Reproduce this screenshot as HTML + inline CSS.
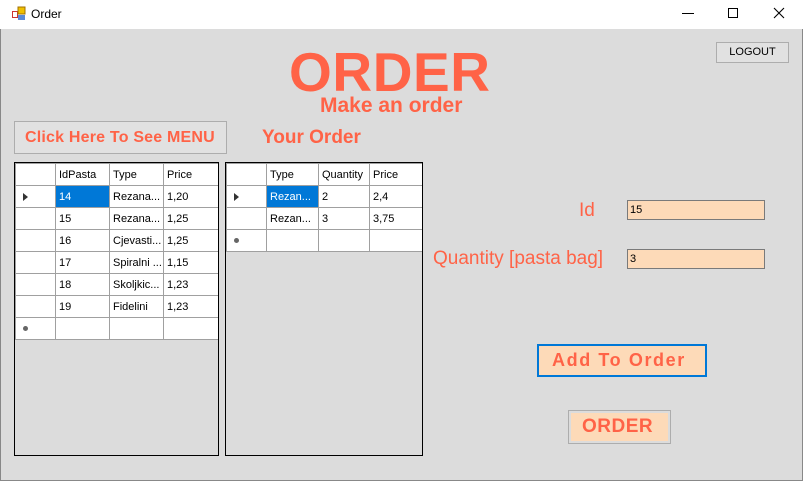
<!DOCTYPE html>
<html><head><meta charset="utf-8"><style>
*{margin:0;padding:0;box-sizing:border-box}
body{width:805px;height:482px;background:#fff;position:relative;overflow:hidden;font-family:"Liberation Sans",Arial,sans-serif}
.win{position:absolute;left:0;top:0;width:803px;height:481px;background:#dcdcdc}
.title{position:absolute;left:0;top:0;width:803px;height:29px;background:#fff}
.abs{position:absolute}
.o{color:#ff6347;font-weight:bold;white-space:nowrap}
table{border-collapse:collapse;font-size:11px;color:#000}
td{border:1px solid #a0a0a0;height:22px;padding:0 0 0 3px;white-space:nowrap;overflow:hidden;background:#fff}
td.rh{padding:0}
.sel{background:#0078d7;color:#fff}
.grid{position:absolute;border:1px solid #000;background:#dcdcdc;overflow:hidden}
.tri{display:inline-block;width:0;height:0;border-left:5px solid #333;border-top:4px solid transparent;border-bottom:4px solid transparent;margin-left:7px;vertical-align:middle}
.dot{display:inline-block;width:5px;height:5px;border-radius:50%;background:#666;margin-left:7px;vertical-align:middle}
input{position:absolute;background:#fddab8;border:1px solid #7a7a7a;font-family:"Liberation Sans",sans-serif;font-size:11px;padding-left:2px}
</style></head><body>
<div class="win">
<div class="abs" style="left:0;top:0;width:1px;height:481px;background:#888"></div>
<div class="abs" style="left:802px;top:0;width:1px;height:481px;background:#888"></div>
<div class="abs" style="left:0;top:480px;width:803px;height:1px;background:#888"></div>
<div class="title">
 <svg class="abs" style="left:11px;top:6px" width="16" height="16"><rect x="1" y="5" width="6" height="7" fill="#c33"/><rect x="2" y="6" width="4" height="5" fill="#fff"/><rect x="7" y="1" width="7" height="7" fill="#f0c000" stroke="#a07000"/><rect x="7" y="9" width="7" height="5" fill="#5a8ad8"/></svg>
 <div class="abs" style="left:31px;top:7px;font-size:12px">Order</div>
 <div class="abs" style="left:682px;top:13px;width:12px;height:1px;background:#000"></div>
 <div class="abs" style="left:728px;top:8px;width:10px;height:10px;border:1px solid #000"></div>
 <svg class="abs" style="left:773px;top:7px" width="12" height="12"><path d="M1 1L11 11M11 1L1 11" stroke="#000" stroke-width="1.1"/></svg>
</div>
<div class="abs" style="left:716px;top:42px;width:73px;height:21px;border:1px solid #adadad;background:#e1e1e1;font-size:11px;text-align:center;line-height:19px">LOGOUT</div>
<div class="abs o" style="left:289px;top:42px;font-size:55px;line-height:60px;letter-spacing:0.6px">ORDER</div>
<div class="abs o" style="left:320px;top:94px;font-size:21px;line-height:24px">Make an order</div>
<div class="abs" style="left:14px;top:121px;width:213px;height:33px;border:1px solid #adadad;background:#e1e1e1"></div>
<div class="abs o" style="left:25px;top:128px;font-size:16px;line-height:20px;letter-spacing:0.2px">Click Here To See MENU</div>
<div class="abs o" style="left:262px;top:127px;font-size:19px;line-height:22px">Your Order</div>

<div class="grid" style="left:14px;top:162px;width:205px;height:294px">
<table style="width:203px;table-layout:fixed">
<col style="width:40px"><col style="width:54px"><col style="width:54px"><col style="width:55px">
<tr><td></td><td>IdPasta</td><td>Type</td><td>Price</td></tr>
<tr><td class="rh"><span class="tri"></span></td><td class="sel">14</td><td>Rezana...</td><td>1,20</td></tr>
<tr><td></td><td>15</td><td>Rezana...</td><td>1,25</td></tr>
<tr><td></td><td>16</td><td>Cjevasti...</td><td>1,25</td></tr>
<tr><td></td><td>17</td><td>Spiralni ...</td><td>1,15</td></tr>
<tr><td></td><td>18</td><td>Skoljkic...</td><td>1,23</td></tr>
<tr><td></td><td>19</td><td>Fidelini</td><td>1,23</td></tr>
<tr><td class="rh"><span class="dot"></span></td><td></td><td></td><td></td></tr>
</table></div>

<div class="grid" style="left:225px;top:162px;width:198px;height:294px">
<table style="width:196px;table-layout:fixed">
<col style="width:40px"><col style="width:52px"><col style="width:51px"><col style="width:53px">
<tr><td></td><td>Type</td><td>Quantity</td><td>Price</td></tr>
<tr><td class="rh"><span class="tri"></span></td><td class="sel">Rezan...</td><td>2</td><td>2,4</td></tr>
<tr><td></td><td>Rezan...</td><td>3</td><td>3,75</td></tr>
<tr><td class="rh"><span class="dot"></span></td><td></td><td></td><td></td></tr>
</table></div>

<div class="abs" style="left:579px;top:200px;font-size:19px;color:#ff6347;line-height:22px">Id</div>
<input style="left:627px;top:200px;width:138px;height:20px" value="15">
<div class="abs" style="left:433px;top:248px;font-size:19px;color:#ff6347;line-height:22px;white-space:nowrap">Quantity [pasta bag]</div>
<input style="left:627px;top:249px;width:138px;height:20px" value="3">
<div class="abs" style="left:537px;top:344px;width:170px;height:33px;border:2px solid #0078d7;background:#fddab8"></div>
<div class="abs o" style="left:552px;top:349px;font-size:18px;line-height:22px;letter-spacing:1.6px">Add To Order</div>
<div class="abs" style="left:568px;top:410px;width:103px;height:34px;border:1px solid #adadad;background:#fddab8;box-shadow:inset 0 0 0 2px #dcdcdc"></div>
<div class="abs o" style="left:582px;top:416px;font-size:19px;line-height:22px;letter-spacing:0.5px">ORDER</div>
</div>
</body></html>
